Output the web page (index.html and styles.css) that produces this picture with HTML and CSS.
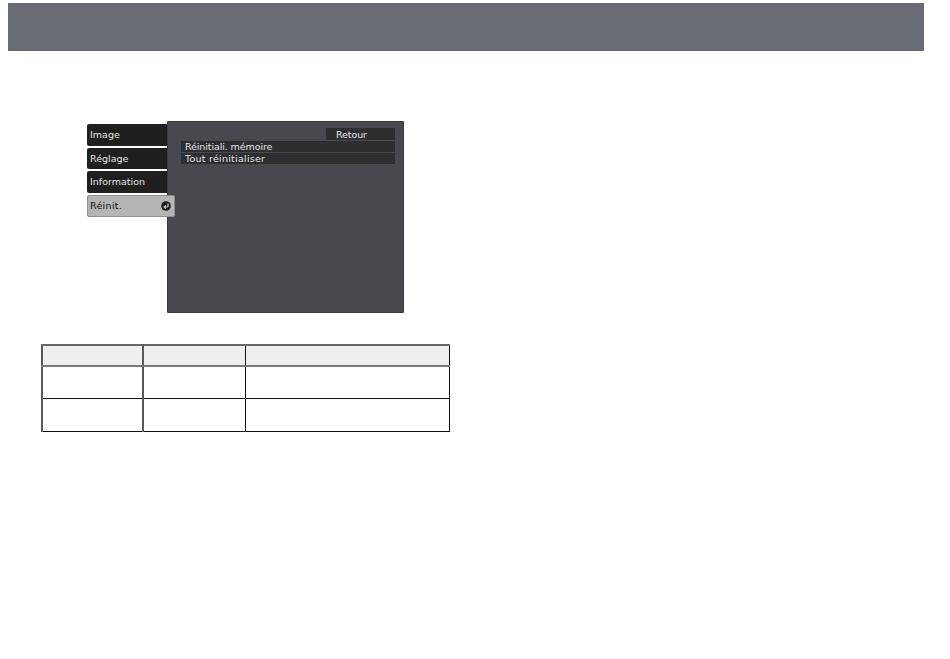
FILE: index.html
```html
<!DOCTYPE html>
<html lang="fr">
<head>
  <meta charset="UTF-8" />
  <meta name="viewport" content="width=device-width, initial-scale=1" />
  <title>Réinit.</title>
  <link rel="stylesheet" href="styles.css">
</head>
<body>
  <div class="banner"></div>

  <div class="osd">
    <div class="tabs">
      <div class="tab">Image</div>
      <div class="tab">Réglage</div>
      <div class="tab">Information</div>
      <div class="tab active">
        Réinit.
        <svg class="enter" width="10" height="10" viewBox="0 0 10 10">
          <circle cx="5" cy="5" r="4.8" fill="#1c1c1c" />
          <path d="M7 2.6V5.2Q7 6 6 6H3.4M4.8 4.4L3.1 6L4.8 7.6" fill="none" stroke="#c8c8c8" stroke-width="1.2" />
        </svg>
      </div>
    </div>
    <div class="panel">
      <div class="back">Retour</div>
      <div class="item">Réinitiali. mémoire</div>
      <div class="item">Tout réinitialiser</div>
    </div>
  </div>

  <table class="options">
    <tr class="head"><td class="c1"></td><td class="c2"></td><td class="c3"></td></tr>
    <tr><td></td><td></td><td></td></tr>
    <tr class="last"><td></td><td></td><td></td></tr>
  </table>
</body>
</html>
```

FILE: styles.css
```css
html, body {
  margin: 0;
  padding: 0;
  background: #fff;
}
body {
  font-family: "DejaVu Sans", sans-serif;
  height: 659px;
  overflow: hidden;
}
.banner {
  height: 48px;
  margin: 3px 26px 0 8px;
  background: #696b75;
}
.osd {
  display: flex;
  align-items: flex-start;
  margin: 70px 0 0 87px;
}
.tabs {
  width: 80px;
  padding-top: 3px;
  display: flex;
  flex-direction: column;
  gap: 2px;
}
.tab {
  height: 21.5px;
  line-height: 21px;
  padding-left: 3px;
  font-size: 9.5px;
  color: #e4e4e4;
  background: #1f1f1f;
  border-radius: 2px 0 0 2px;
}
.tab.active {
  position: relative;
  z-index: 1;
  width: 88px;
  color: #111;
  letter-spacing: 0.3px;
  background: #b5b5b5;
  border: 1px solid #8e8e8e;
  border-radius: 2px;
  box-sizing: border-box;
  height: 22px;
  padding-left: 2px;
  padding-right: 3px;
  display: flex;
  justify-content: space-between;
  align-items: center;
}
.panel {
  width: 237px;
  height: 192px;
  box-sizing: border-box;
  padding: 6px 8px 0 13px;
  background: #48494f;
  border-radius: 1px;
  border: 1px solid #3a3a3e;
  color: #e4e4e4;
  font-size: 9.5px;
  letter-spacing: -0.1px;
}
.back {
  width: 69px;
  height: 12px;
  line-height: 14px;
  margin-left: auto;
  padding-left: 10px;
  box-sizing: border-box;
  background: #2e2e31;
}
.item {
  height: 11px;
  line-height: 11px;
  padding-left: 4px;
  margin-top: 1px;
  background: #2e2e31;
}
.item + .item {
  letter-spacing: 0.25px;
}
.options {
  margin: 31px 0 0 41px;
  width: 409px;
  height: 87px;
  border-collapse: collapse;
  table-layout: fixed;
}
.options td {
  border: 1px solid #111;
  padding: 0;
  height: 31px;
}
.options .last td {
  height: 32px;
}
.options td:first-child {
  border-left: 2px solid #5a5a5a;
  border-right: 2px solid #5a5a5a;
}
.options .head td {
  height: 19px;
  background: #efefef;
  border-top: 2px solid #6a6a6a;
  border-bottom: 2px solid #777;
}
.c1 { width: 99px; }
.c2 { width: 101px; }
```
